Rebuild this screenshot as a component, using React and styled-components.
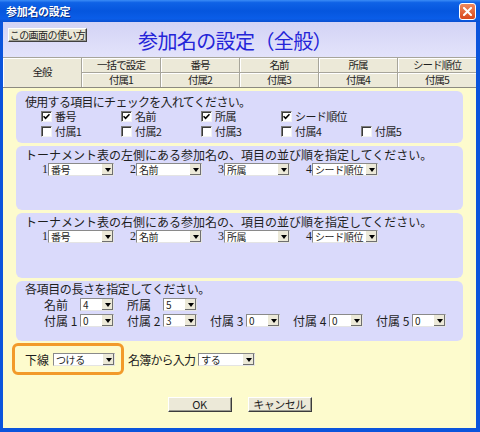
import styled, { createGlobalStyle } from "styled-components";

const GlobalStyle = createGlobalStyle`
  html, body {
    margin: 0;
    padding: 0;
    background: #ffffff;
  }
  * {
    box-sizing: border-box;
  }
`;

const JP = `"Noto Sans CJK JP", "Noto Sans", sans-serif`;

const Window = styled.div`
  width: 480px;
  height: 432px;
  display: flex;
  flex-direction: column;
  background: #0b54dc;
  font-family: ${JP};
  color: #1e1e1e;
  overflow: hidden;
`;

const TitleBar = styled.div`
  height: 22px;
  flex: none;
  display: flex;
  align-items: center;
  justify-content: space-between;
  padding: 0 4px 0 6px;
  background: linear-gradient(
    to bottom,
    #3b8cf6 0%,
    #0f62e6 12%,
    #0556de 50%,
    #0a5de8 85%,
    #0a4fd0 100%
  );
`;

const TitleText = styled.span`
  color: #ffffff;
  font-size: 11px;
  font-weight: 700;
  letter-spacing: -0.3px;
  text-shadow: 1px 1px 0 #0a2f8a;
`;

const CloseButton = styled.div`
  width: 17px;
  height: 17px;
  border: 1px solid #ffffff;
  border-radius: 3px;
  background: linear-gradient(to bottom, #f08a5e, #d9471b);
  display: flex;
  align-items: center;
  justify-content: center;
`;

const Client = styled.div`
  flex: 1;
  margin: 0 4px 4px 3px;
  display: flex;
  flex-direction: column;
  background: #fdfbcd;
`;

const Header = styled.div`
  height: 35px;
  flex: none;
  display: flex;
  align-items: flex-start;
  padding: 6px 0 0 5px;
  background: linear-gradient(to bottom, #d3d3f5, #e3e3fb);
`;

const HelpButton = styled.div`
  width: 79px;
  height: 14px;
  display: flex;
  align-items: center;
  justify-content: center;
  background: #ece9d8;
  border: 1px solid;
  border-color: #ffffff #404040 #404040 #ffffff;
  box-shadow: inset -1px -1px 0 #9a9a90;
  font-size: 10px;
  letter-spacing: -0.55px;
  line-height: 1;
  white-space: nowrap;
`;

const MainTitle = styled.h1`
  margin: 1px 0 0 51px;
  font-size: 20px;
  font-weight: 400;
  line-height: 24px;
  color: #2424d8;
  letter-spacing: -0.6px;
  white-space: nowrap;
`;

const TabGrid = styled.div`
  flex: none;
  display: grid;
  grid-template-columns: repeat(6, 1fr);
  grid-template-rows: 14px 14px;
  gap: 1px;
  background: #a7a59a;
  border-top: 1px solid #a7a59a;
  border-bottom: 1px solid #8c8a80;
`;

const TabCell = styled.div`
  grid-row: ${(p) => (p.$tall ? "span 2" : "auto")};
  display: flex;
  align-items: center;
  justify-content: center;
  background: #ece9d8;
  box-shadow: inset 1px 1px 0 #ffffff;
  font-size: 10.5px;
  letter-spacing: -0.9px;
  line-height: 1;
  white-space: nowrap;
`;

const Body = styled.div`
  flex: 1;
  display: flex;
  flex-direction: column;
  gap: 3px;
  padding: 3px 13px 0 13px;
`;

const Panel = styled.div`
  height: ${(p) => p.$h}px;
  flex: none;
  background: #dadafb;
  border-radius: 6px;
  padding: ${(p) => p.$pt ?? 1}px 0 0 9px;
  display: flex;
  flex-direction: column;
`;

const PanelTitle = styled.div`
  height: 15px;
  font-size: 12px;
  line-height: 15px;
  letter-spacing: ${(p) => p.$ls || 0}px;
  white-space: nowrap;
`;

const CheckGrid = styled.div`
  display: grid;
  grid-template-columns: repeat(5, 80px);
  grid-auto-rows: 15px;
  padding-left: 16px;
`;

const CheckItem = styled.label`
  display: flex;
  align-items: center;
  gap: 3px;
  font-size: 11px;
  line-height: 13px;
  letter-spacing: -0.6px;
  white-space: nowrap;
`;

const Box = styled.span`
  width: 11px;
  height: 11px;
  flex: none;
  background: #ffffff;
  border: 1px solid;
  border-color: #7b7b7b #f2f2f2 #f2f2f2 #7b7b7b;
  box-shadow: inset 1px 1px 0 #3a3a3a;
  display: flex;
  align-items: center;
  justify-content: center;
`;

const OrderRow = styled.div`
  display: flex;
  margin-top: 1px;
  padding-left: 17px;
`;

const OrderItem = styled.div`
  width: 88px;
  display: flex;
  align-items: center;
`;

const Num = styled.span`
  width: 6px;
  font-family: "Liberation Serif", serif;
  font-size: 12px;
  line-height: 13px;
`;

const LenRows = styled.div`
  display: flex;
  flex-direction: column;
  gap: 3px;
  margin-top: 2px;
  padding-left: 19px;
`;

const LenRow = styled.div`
  display: flex;
`;

const LenItem = styled.div`
  width: 83px;
  display: flex;
  align-items: center;
`;

const LenLabel = styled.span`
  width: 36px;
  font-size: 12px;
  line-height: 13px;
  white-space: nowrap;
`;

const SelectBox = styled.div`
  width: ${(p) => p.$w}px;
  height: 13px;
  flex: none;
  display: flex;
  align-items: stretch;
  background: #ffffff;
  border: 1px solid;
  border-color: #8a8a8a #e4e4e4 #e4e4e4 #8a8a8a;
`;

const SelectValue = styled.span`
  flex: 1;
  display: flex;
  align-items: center;
  padding-left: 2px;
  font-size: 10px;
  line-height: 11px;
  letter-spacing: -0.4px;
  white-space: nowrap;
`;

const DropButton = styled.span`
  width: 12px;
  flex: none;
  display: flex;
  align-items: center;
  justify-content: center;
  background: #ece9d8;
  border-left: 1px solid #ffffff;
  box-shadow: inset -1px -1px 0 #6f6f6f;
`;

const Arrow = styled.span`
  width: 0;
  height: 0;
  margin-top: 1px;
  border-top: 4px solid #000000;
  border-left: 3px solid transparent;
  border-right: 3px solid transparent;
`;

const BottomRow = styled.div`
  display: flex;
  align-items: center;
  margin-top: -1px;
`;

const Highlight = styled.div`
  height: 32px;
  margin-left: -4px;
  display: flex;
  align-items: center;
  gap: 4px;
  padding: 0 6px 0 10px;
  border: 3px solid #f29a2a;
  border-radius: 6px;
`;

const RowLabel = styled.span`
  font-size: 12px;
  line-height: 13px;
  letter-spacing: ${(p) => p.$ls || 0}px;
  white-space: nowrap;
`;

const Plain = styled.div`
  display: flex;
  align-items: center;
  gap: 3px;
  margin-left: 4px;
`;

const ButtonRow = styled.div`
  display: flex;
  justify-content: center;
  gap: 16px;
  margin-top: 19px;
`;

const PushButton = styled.div`
  width: 64px;
  height: 15px;
  display: flex;
  align-items: center;
  justify-content: center;
  background: #ece9d8;
  border: 1px solid;
  border-color: #ffffff #3c3c3c #3c3c3c #ffffff;
  box-shadow: inset -1px -1px 0 #9a9a90;
  font-size: 11px;
  letter-spacing: -0.5px;
  line-height: 1;
`;

function Select({ w, value }) {
  return (
    <SelectBox $w={w}>
      <SelectValue>{value}</SelectValue>
      <DropButton>
        <Arrow />
      </DropButton>
    </SelectBox>
  );
}

function Check({ label, checked }) {
  return (
    <CheckItem>
      <Box>
        {checked && (
          <svg width="7" height="7" viewBox="0 0 7 7">
            <path d="M0.5 3.2 L2.6 5.3 L6.5 1.2" fill="none" stroke="#000" strokeWidth="1.6" />
          </svg>
        )}
      </Box>
      {label}
    </CheckItem>
  );
}

const topRow = ["一括で設定", "番号", "名前", "所属", "シード順位"];
const bottomRow = ["付属1", "付属2", "付属3", "付属4", "付属5"];
const order = ["番号", "名前", "所属", "シード順位"];

function OrderSelects() {
  return (
    <OrderRow>
      {order.map((v, i) => (
        <OrderItem key={v}>
          <Num>{i + 1}</Num>
          <Select w={66} value={v} />
        </OrderItem>
      ))}
    </OrderRow>
  );
}

export default function App() {
  return (
    <>
      <GlobalStyle />
      <Window>
        <TitleBar>
          <TitleText>参加名の設定</TitleText>
          <CloseButton>
            <svg width="9" height="9" viewBox="0 0 9 9">
              <path d="M1 1 L8 8 M8 1 L1 8" stroke="#fff" strokeWidth="2" strokeLinecap="square" />
            </svg>
          </CloseButton>
        </TitleBar>
        <Client>
          <Header>
            <HelpButton>この画面の使い方</HelpButton>
            <MainTitle>参加名の設定（全般）</MainTitle>
          </Header>
          <TabGrid>
            <TabCell $tall>全般</TabCell>
            {topRow.map((t) => (
              <TabCell key={t}>{t}</TabCell>
            ))}
            {bottomRow.map((t) => (
              <TabCell key={t}>{t}</TabCell>
            ))}
          </TabGrid>
          <Body>
            <Panel $h={52} $pt={3}>
              <PanelTitle $ls={-0.7}>使用する項目にチェックを入れてください。</PanelTitle>
              <CheckGrid>
                <Check label="番号" checked />
                <Check label="名前" checked />
                <Check label="所属" checked />
                <Check label="シード順位" checked />
                <span />
                {bottomRow.map((t) => (
                  <Check key={t} label={t} />
                ))}
              </CheckGrid>
            </Panel>
            <Panel $h={64}>
              <PanelTitle>トーナメント表の左側にある参加名の、項目の並び順を指定してください。</PanelTitle>
              <OrderSelects />
            </Panel>
            <Panel $h={65}>
              <PanelTitle>トーナメント表の右側にある参加名の、項目の並び順を指定してください。</PanelTitle>
              <OrderSelects />
            </Panel>
            <Panel $h={60} $pt={0}>
              <PanelTitle $ls={-0.4}>各項目の長さを指定してください。</PanelTitle>
              <LenRows>
                <LenRow>
                  <LenItem>
                    <LenLabel>名前</LenLabel>
                    <Select w={34} value="4" />
                  </LenItem>
                  <LenItem>
                    <LenLabel>所属</LenLabel>
                    <Select w={34} value="5" />
                  </LenItem>
                </LenRow>
                <LenRow>
                  {["0", "3", "0", "0", "0"].map((v, i) => (
                    <LenItem key={i}>
                      <LenLabel>付属 {i + 1}</LenLabel>
                      <Select w={34} value={v} />
                    </LenItem>
                  ))}
                </LenRow>
              </LenRows>
            </Panel>
            <BottomRow>
              <Highlight>
                <RowLabel>下線</RowLabel>
                <Select w={62} value="つける" />
              </Highlight>
              <Plain>
                <RowLabel $ls={-0.8}>名簿から入力</RowLabel>
                <Select w={57} value="する" />
              </Plain>
            </BottomRow>
            <ButtonRow>
              <PushButton>OK</PushButton>
              <PushButton>キャンセル</PushButton>
            </ButtonRow>
          </Body>
        </Client>
      </Window>
    </>
  );
}
